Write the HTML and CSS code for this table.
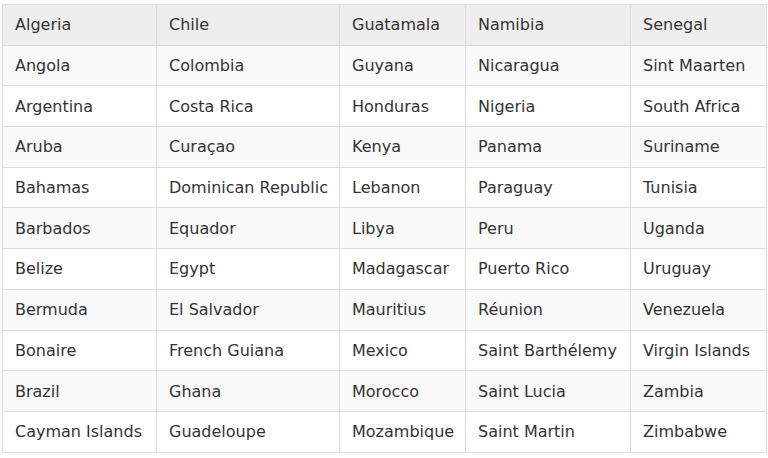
FILE: index.html
```html
<!DOCTYPE html>
<html lang="en">
<head>
<meta charset="utf-8">
<title>Countries</title>
<link rel="stylesheet" href="styles.css">
</head>
<body>
<div class="wrap">
<table class="grid">
<colgroup>
<col class="c1"><col class="c2"><col class="c3"><col class="c4"><col class="c5">
</colgroup>
<thead>
<tr><th>Algeria</th><th>Chile</th><th>Guatamala</th><th>Namibia</th><th>Senegal</th></tr>
</thead>
<tbody>
<tr><td>Angola</td><td>Colombia</td><td>Guyana</td><td>Nicaragua</td><td>Sint Maarten</td></tr>
<tr><td>Argentina</td><td>Costa Rica</td><td>Honduras</td><td>Nigeria</td><td>South Africa</td></tr>
<tr><td>Aruba</td><td>Curaçao</td><td>Kenya</td><td>Panama</td><td>Suriname</td></tr>
<tr><td>Bahamas</td><td>Dominican Republic</td><td>Lebanon</td><td>Paraguay</td><td>Tunisia</td></tr>
<tr><td>Barbados</td><td>Equador</td><td>Libya</td><td>Peru</td><td>Uganda</td></tr>
<tr><td>Belize</td><td>Egypt</td><td>Madagascar</td><td>Puerto Rico</td><td>Uruguay</td></tr>
<tr><td>Bermuda</td><td>El Salvador</td><td>Mauritius</td><td>Réunion</td><td>Venezuela</td></tr>
<tr><td>Bonaire</td><td>French Guiana</td><td>Mexico</td><td>Saint Barthélemy</td><td>Virgin Islands</td></tr>
<tr><td>Brazil</td><td>Ghana</td><td>Morocco</td><td>Saint Lucia</td><td>Zambia</td></tr>
<tr><td>Cayman Islands</td><td>Guadeloupe</td><td>Mozambique</td><td>Saint Martin</td><td>Zimbabwe</td></tr>
</tbody>
</table>
</div>
</body>
</html>
```
FILE: styles.css
```css
html, body {
  margin: 0;
  padding: 0;
  background: #ffffff;
}

.wrap {
  padding: 4px 2px 0 2px;
}

.grid {
  width: 764px;
  border-collapse: collapse;
  table-layout: fixed;
  font-family: "DejaVu Sans", Verdana, sans-serif;
  font-size: 16px;
  color: #333333;
}

.c1 { width: 154px; }
.c2 { width: 183px; }
.c3 { width: 126px; }
.c4 { width: 165px; }
.c5 { width: 136px; }

.grid th,
.grid td {
  border: 1px solid #dddddd;
  padding: 0 12px;
  height: 39.7px;
  text-align: left;
  font-weight: normal;
  white-space: nowrap;
  vertical-align: middle;
}

.grid thead th {
  background: #eeeeee;
}

.grid tbody tr:nth-child(odd) td {
  background: #f9f9f9;
}
```
